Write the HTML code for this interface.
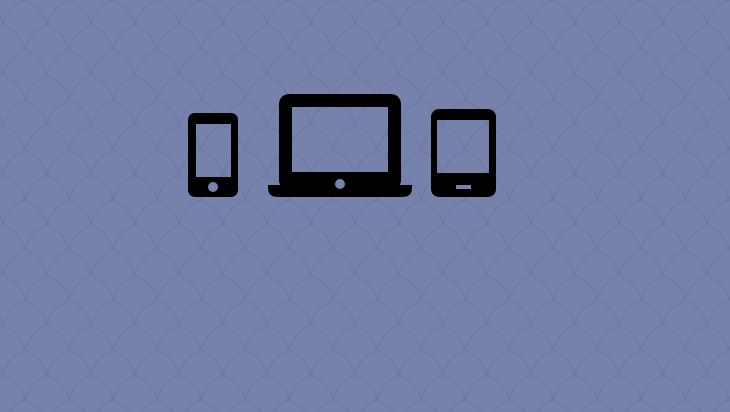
<!DOCTYPE html>
<html><head><style>
html,body{margin:0;padding:0;}
body{width:730px;height:412px;overflow:hidden;background:#7480a9;}
</style></head><body>
<svg width="730" height="412" viewBox="0 0 730 412" style="position:absolute;left:0;top:0">
<defs>
<pattern id="sc" width="44" height="50" patternUnits="userSpaceOnUse" x="3" y="0">
<rect width="44" height="50" fill="#7682ac"/>
<path d="M0 25 Q4 8 22 0 M44 25 Q40 8 22 0 M22 50 Q26 33 44 25 M22 50 Q18 33 0 25" fill="none" stroke="#6e789f" stroke-width="1.2"/>
</pattern>
</defs>
<rect width="730" height="412" fill="url(#sc)"/>
<!-- phone -->
<rect x="188" y="113" width="50" height="84" rx="7" fill="#000"/>
<rect x="196" y="124" width="35" height="53" fill="url(#sc)"/>
<circle cx="213" cy="187" r="5" fill="#7783ad"/>
<!-- laptop -->
<rect x="279" y="94" width="122" height="96" rx="10" fill="#000"/>
<rect x="292" y="107" width="96" height="65" fill="url(#sc)"/>
<path d="M268 185 H412 V188 Q412 197 402 197 H278 Q268 197 268 188 Z" fill="#000"/>
<circle cx="340" cy="184" r="5" fill="#7783ad"/>
<!-- tablet -->
<rect x="431" y="109" width="65" height="88" rx="8" fill="#000"/>
<rect x="437" y="120" width="52" height="53" fill="url(#sc)"/>
<rect x="456" y="185" width="15" height="4" fill="#7783ad"/>
</svg>
</body></html>
